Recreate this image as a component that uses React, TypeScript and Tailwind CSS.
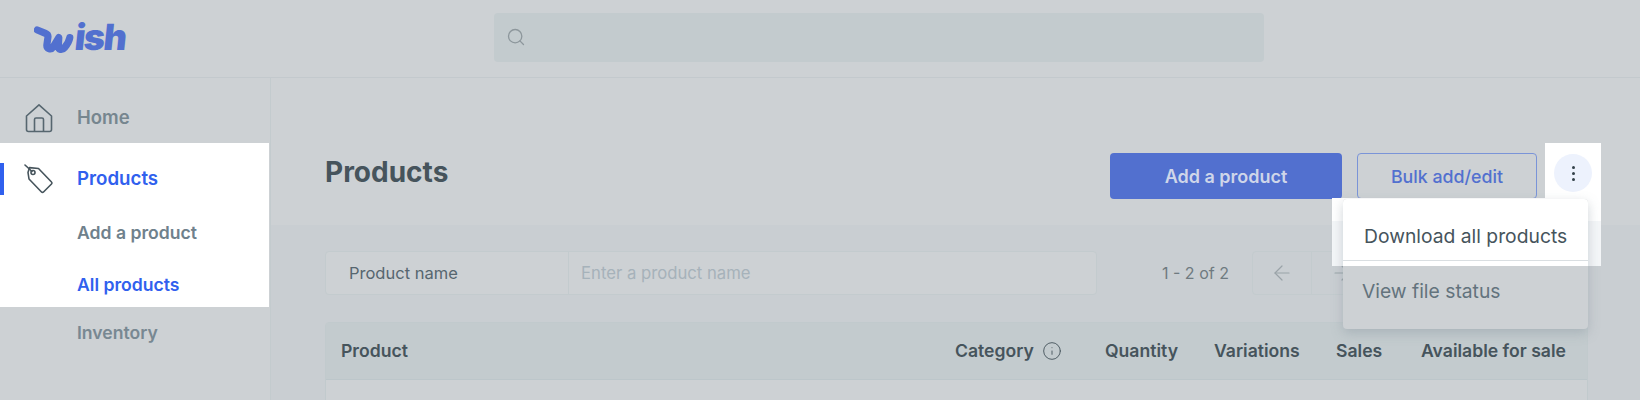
import { ArrowLeft, ArrowRight, Info, Search } from "lucide-react";

const font = { fontFamily: '"Inter", "Liberation Sans", sans-serif' };

const HomeIcon = () => (
   <svg width="30" height="30" viewBox="0 0 30 30" fill="none" stroke="#56666f" strokeWidth="1.6" strokeLinejoin="round">
      <path d="M2.5 13 15 1.8 27.5 13v13.5a2 2 0 0 1-2 2h-21a2 2 0 0 1-2-2z" />
      <path d="M10.5 28.5V16.5a1.5 1.5 0 0 1 1.500-1.500h6a1.500 1.500 0 0 1 1.500 1.500v12" />
   </svg>
);

const TagIcon = () => (
   <svg width="30" height="30" viewBox="0 0 30 30" fill="none" stroke="#46545c" strokeWidth="1.6" strokeLinejoin="round" strokeLinecap="round">
      <path d="M4 8.500 5.500 3.600 14.500 4.500 27.500 18a1.400 1.400 0 0 1 0 2L19.500 28a1.400 1.400 0 0 1-2 0L5 15z" />
      <circle cx="9" cy="8.500" r="2" />
      <path d="M1 1 8 7.500" />
   </svg>
);

const WishLogo = () => (
   <div className="flex items-end text-[#5270cf] pl-[34px]">
      <svg width="42" height="30" viewBox="0 0 44 30" fill="none" stroke="currentColor" strokeWidth="7.5" strokeLinecap="round" strokeLinejoin="round">
         <path d="M3.500 4.500 12 8 c2.500 1 3 2.500 2.500 5 l-1 7 c-.5 4 4 6 6.500 2.500 l6-10 -.5 9 c0 4 4 4.500 6.500 1.500 c3-3.500 5-7.500 5.500-10.500" />
      </svg>
      <span className="text-[36px] leading-[36px] font-black tracking-[-1.5px] -skew-x-6 -ml-[1px]" style={font}>ish</span>
   </div>
);

const App = () => (
   <div className="w-[1640px] h-[400px] overflow-hidden flex flex-col bg-[#cdd1d4] text-[#46545c]" style={font}>
      <header className="h-[78px] shrink-0 border-b border-[#c3c9cd] flex items-center relative">
         <div className="w-[494px] shrink-0 -mt-[4px]">
            <WishLogo />
         </div>
         <div className="w-[770px] h-[49px] -mt-[3px] rounded-[4px] bg-[#c3cbce] flex items-center pl-[12px]">
            <Search size={20} strokeWidth={1.6} className="text-[#8d979c]" />
         </div>
      </header>

      <div className="flex flex-1 min-h-0">
         <aside className="w-[271px] shrink-0 border-r border-[#c3cbce]">
            <div className="h-[65px] flex items-center gap-[23px] pl-[24px] pt-[15px] text-[18.5px] text-[#76868f] font-semibold">
               <HomeIcon />
               <span>Home</span>
            </div>
            <div className="bg-white h-[164px] w-[269px]">
               <div className="h-[71px] flex items-center relative pl-[24px] gap-[23px] text-[18.7px] text-[#3060ee] font-semibold">
                  <div className="absolute left-0 top-[20px] w-[4px] h-[32px] bg-[#3060ee]" />
                  <TagIcon />
                  <span className="mt-[2px]">Products</span>
               </div>
               <div className="pl-[77px] text-[17.6px] text-[#6f818c] font-semibold leading-[24px] mt-[7px]">Add a product</div>
               <div className="pl-[77px] text-[17.6px] text-[#3060ee] font-semibold leading-[24px] mt-[28px]">All products</div>
            </div>
            <div className="pl-[77px] text-[17.6px] text-[#788892] font-semibold leading-[24px] mt-[14px]">Inventory</div>
         </aside>

         <main className="flex-1 min-w-0 relative bg-[#c9ced2]">
            <div className="h-[147px] bg-[#cdd1d4] flex items-start justify-between pl-[54px] pr-[39px] pt-[65px]">
               <h1 className="text-[28px] leading-[36px] font-bold mt-[11px] text-[#46545c]">Products</h1>
               <div className="flex items-start">
                  <button className="w-[232px] h-[46px] mt-[10px] rounded-[4px] bg-[#5270cf] text-[#cfd6e9] text-[18px] font-semibold">
                     Add a product
                  </button>
                  <button className="w-[180px] h-[46px] mt-[10px] ml-[15px] rounded-[4px] border border-[#7a94d8] text-[#5270cf] text-[17.8px] font-medium pt-[2px]">
                     Bulk add/edit
                  </button>
                  <div className="w-[56px] h-[55px] ml-[8px] bg-white flex items-center justify-center">
                     <div className="w-[38px] h-[38px] mt-[5px] rounded-full bg-[#edf2fd] flex flex-col items-center justify-center gap-[3px]">
                        <span className="w-[3px] h-[3px] rounded-full bg-[#33414a]" />
                        <span className="w-[3px] h-[3px] rounded-full bg-[#33414a]" />
                        <span className="w-[3px] h-[3px] rounded-full bg-[#33414a]" />
                     </div>
                  </div>
               </div>
            </div>

            <div className="flex items-center mt-[26px] ml-[54px] h-[44px]">
               <div className="w-[772px] h-[44px] rounded-[4px] border border-[#c3cbce] bg-[#cdd1d4] flex items-center">
                  <div className="w-[243px] h-full border-r border-[#c3cbce] pl-[23px] flex items-center text-[16.5px] text-[#56666f]">
                     Product name
                  </div>
                  <span className="pl-[12px] pt-[2px] text-[16.7px] text-[#a6b2ba]">Enter a product name</span>
               </div>
               <span className="ml-[65px] text-[16px] text-[#6f7a80] w-[90px]">1 - 2 of 2</span>
               <div className="w-[120px] h-[44px] rounded-[4px] border border-[#c3cbce] flex items-center">
                  <div className="w-[59px] h-full border-r border-[#c3cbce] flex items-center justify-center">
                     <ArrowLeft size={24} strokeWidth={1.2} className="text-[#9aa3a8]" />
                  </div>
                  <div className="w-[59px] h-full flex items-center justify-center">
                     <ArrowRight size={24} strokeWidth={1.2} className="text-[#9aa3a8]" />
                  </div>
               </div>
            </div>

            <div className="mt-[27px] ml-[54px] w-[1263px] h-[90px] rounded-t-[4px] border border-[#c1cacd] bg-[#cdd1d4]">
               <div className="h-[57px] bg-[#c3cbce] border-b border-[#bcc6ca] flex items-center pl-[15px] pt-[1px] text-[17.6px] font-semibold text-[#46545c]">
                  <span className="w-[614px]">Product</span>
                  <div className="w-[150px] flex items-center">
                     <span>Category</span>
                     <Info size={20} strokeWidth={1.1} className="ml-[8px] text-[#46545c]" />
                  </div>
                  <span className="w-[109px]">Quantity</span>
                  <span className="w-[122px]">Variations</span>
                  <span className="w-[85px]">Sales</span>
                  <span>Available for sale</span>
               </div>
            </div>

            {/* spotlight around the first menu item */}
            <div className="absolute left-[1061px] top-[120px] w-[269px] h-[68px] bg-[#f4f6f8] border-t-[23px] border-white" />
            <div className="absolute left-[1072px] top-[121px] w-[245px] h-[130px] rounded-[4px] bg-[#cdd1d4] shadow-[0_4px_12px_rgba(120,135,145,0.35)] overflow-hidden">
               <div className="h-[67px] bg-white">
                  <div className="h-[62px] border-b border-[#d9dee1] pl-[21px] pt-[23px] text-[19.3px] leading-[28px] text-[#46545c]">
                     Download all products
                  </div>
               </div>
               <div className="pl-[19px] pt-[11px] text-[19.3px] leading-[28px] text-[#63737d]">View file status</div>
            </div>
         </main>
      </div>
   </div>
);

export default App;
